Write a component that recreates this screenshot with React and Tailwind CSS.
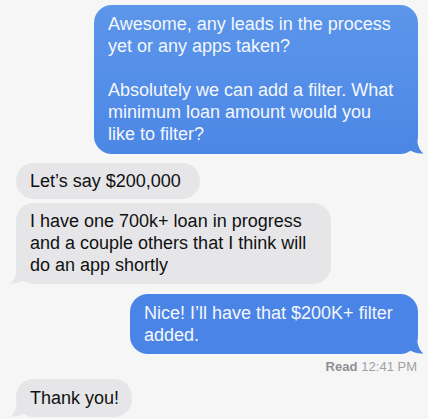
import React from "react";

const font = { fontFamily: '"Liberation Sans", Arial, sans-serif' };

function TailRight({ color }) {
  return (
    <svg
      className="absolute bottom-0 right-[-6px]"
      width="18"
      height="18"
      viewBox="0 0 18 18"
    >
      <path
        d="M0 0 L11 0 C11 8 13 14 17.5 17.5 C12 18 7 16.5 3 13.5 Z"
        fill={color}
      />
    </svg>
  );
}

function TailLeft({ color }) {
  return (
    <svg
      className="absolute bottom-0 left-[-6px]"
      width="18"
      height="18"
      viewBox="0 0 18 18"
    >
      <path
        d="M18 0 L7 0 C7 8 5 14 0.5 17.5 C6 18 11 16.5 15 13.5 Z"
        fill={color}
      />
    </svg>
  );
}

export default function App() {
  return (
    <div
      className="w-[428px] h-[419px] overflow-hidden bg-[#f6f6f6] flex flex-col pt-[5px] text-[18px] leading-[22px]"
      style={font}
    >
      <div className="flex justify-end pr-[10px]">
        <div className="relative w-[324px] rounded-[18px] bg-gradient-to-b from-[#5c96ea] to-[#4c87e6] px-[14px] pt-[8px] pb-[9px] text-[#f4f7fd] whitespace-nowrap">
          <div className="relative z-10">
            Awesome, any leads in the process
            <br />
            yet or any apps taken?
            <br />
            <br />
            Absolutely we can add a filter. What
            <br />
            minimum loan amount would you
            <br />
            like to filter?
          </div>
          <TailRight color="#4c87e6" />
        </div>
      </div>

      <div className="flex flex-col items-start pl-[16px] mt-[9px] gap-[4px]">
        <div className="w-[184px] rounded-[18px] bg-[#e6e6e9] px-[14px] py-[7px] text-[#111] whitespace-nowrap">
          Let’s say $200,000
        </div>
        <div className="relative w-[315px] rounded-[18px] bg-[#e6e6e9] px-[14px] pt-[7px] pb-[8px] text-[#111] whitespace-nowrap">
          <div className="relative z-10">
            I have one 700k+ loan in progress
            <br />
            and a couple others that I think will
            <br />
            do an app shortly
          </div>
          <TailLeft color="#e6e6e9" />
        </div>
      </div>

      <div className="flex justify-end pr-[10px] mt-[10px]">
        <div className="relative w-[288px] rounded-[18px] bg-[#4a84e6] px-[14px] py-[8px] text-[#f4f7fd] whitespace-nowrap">
          <div className="relative z-10">
            Nice! I’ll have that $200K+ filter
            <br />
            added.
          </div>
          <TailRight color="#4a84e6" />
        </div>
      </div>

      <div className="flex justify-end pr-[11px] mt-[6px] text-[13px] leading-[14px] text-[#8e8e93]">
        <span className="font-semibold">Read</span>
        <span className="ml-[4px] text-[#a0a0a5]">12:41 PM</span>
      </div>

      <div className="flex pl-[16px] mt-[5px]">
        <div className="relative w-[116px] rounded-[18px] bg-[#e6e6e9] px-[14px] py-[8px] text-[#111] whitespace-nowrap">
          <div className="relative z-10">Thank you!</div>
          <TailLeft color="#e6e6e9" />
        </div>
      </div>
    </div>
  );
}
